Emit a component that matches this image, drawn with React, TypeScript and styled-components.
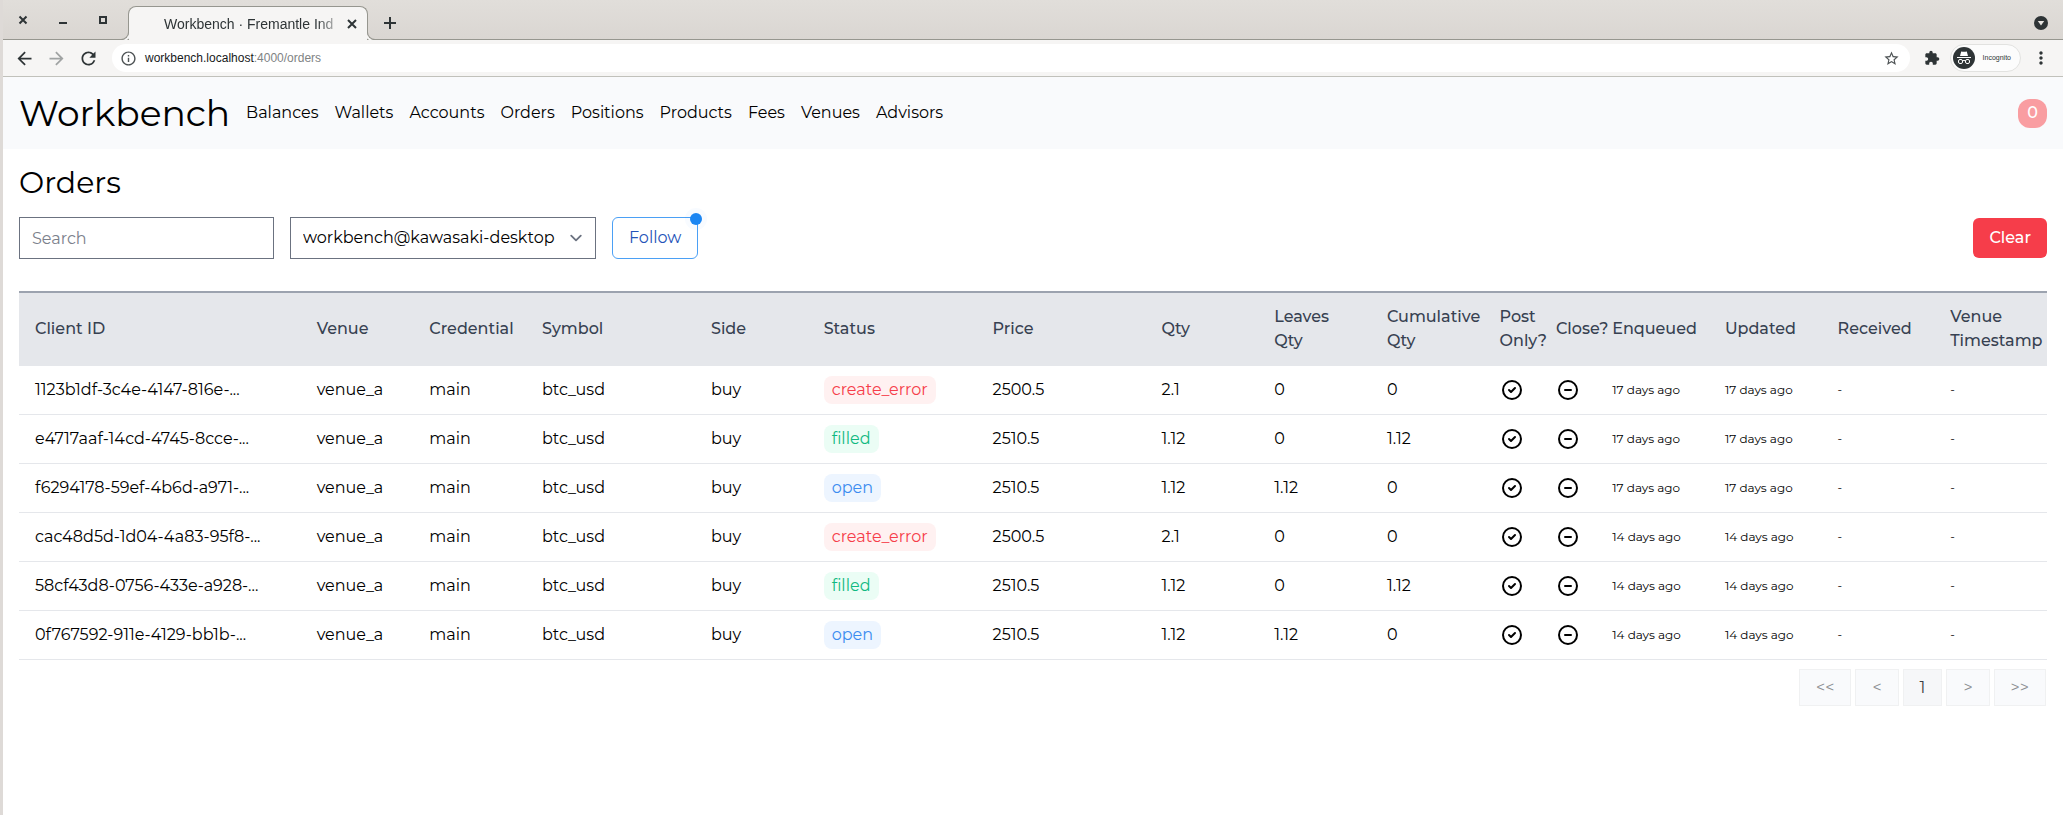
import React from "react";
import styled, { createGlobalStyle, css } from "styled-components";
import {
  MdArrowBack,
  MdArrowForward,
  MdRefresh,
  MdInfoOutline,
  MdStarBorder,
  MdExtension,
  MdMoreVert,
} from "react-icons/md";

const GlobalStyle = createGlobalStyle`
  *, *::before, *::after { box-sizing: border-box; }
  body {
    margin: 0;
    background: #ffffff;
    color: #000000;
    font-family: Montserrat, Inter, "Liberation Sans", sans-serif;
    font-size: 16px;
    line-height: 24px;
  }
  button, input, select { font: inherit; color: inherit; margin: 0; }
  a { color: inherit; text-decoration: none; }
`;

const Window = styled.div`
  display: flex;
  flex-direction: column;
  min-height: 100vh;
  border-left: 3px solid #dedad7;
`;

/* Browser frame */

const TabStrip = styled.div`
  display: flex;
  align-items: flex-end;
  height: 40px;
  padding-right: 14px;
  background: linear-gradient(#e1deda, #dad6d2);
  border-bottom: 1px solid #96968f;
  font-family: "Liberation Sans", sans-serif;
  color: #2e3436;
`;

const IconButton = styled.button`
  display: flex;
  flex: none;
  align-items: center;
  justify-content: center;
  width: 16px;
  height: 16px;
  padding: 0;
  border: 0;
  background: none;
  color: inherit;

  svg {
    flex: none;
  }
`;

const WindowButtons = styled.div`
  display: flex;
  align-self: center;
  gap: 24px;
  width: 125px;
  padding-left: 12px;
`;

const Tab = styled.div`
  position: relative;
  display: flex;
  align-items: center;
  width: 240px;
  height: 34px;
  margin-bottom: -1px;
  padding: 0 7px 0 35px;
  background: #f6f5f4;
  border: 1px solid #96968f;
  border-bottom: 0;
  border-radius: 8px 8px 0 0;

  &::before,
  &::after {
    content: "";
    position: absolute;
    bottom: 0;
    width: 8px;
    height: 8px;
    border: 0 solid #96968f;
    border-bottom-width: 1px;
  }
  &::before {
    left: -8px;
    border-right-width: 1px;
    border-bottom-right-radius: 8px;
    box-shadow: 2px 1px 0 0 #f6f5f4;
  }
  &::after {
    right: -8px;
    border-left-width: 1px;
    border-bottom-left-radius: 8px;
    box-shadow: -2px 1px 0 0 #f6f5f4;
  }
`;

const TabTitle = styled.span`
  flex: 1;
  white-space: nowrap;
  font-size: 14px;
  mask-image: linear-gradient(to right, #000 85%, transparent);
`;

const NewTab = styled(IconButton)`
  align-self: center;
  margin: 6px auto 0 14px;
`;

const TabSearch = styled(IconButton)`
  align-self: center;
  margin-top: 6px;
`;

const AddressBar = styled.div`
  display: flex;
  align-items: center;
  gap: 16px;
  height: 37px;
  padding: 0 14px 0 13px;
  background: #f6f5f4;
  border-bottom: 1px solid #c1c1bb;
  font-family: "Liberation Sans", sans-serif;
  color: #2e3436;
`;

const DimIconButton = styled(IconButton)`
  color: #a0a3a3;
`;

const Omnibox = styled.div`
  display: flex;
  flex: 1;
  align-items: center;
  gap: 8px;
  height: 28px;
  margin-right: -2px;
  padding: 0 10px 0 8px;
  border-radius: 14px;
  background: #ffffff;
  color: #4d5254;
`;

const Url = styled.span`
  flex: 1;
  font-size: 12px;
  color: #808384;

  b {
    font-weight: 400;
    color: #16191a;
  }
`;

const Incognito = styled.button`
  display: flex;
  align-items: center;
  gap: 8px;
  height: 28px;
  margin: 0 -4px 0 -6px;
  padding: 0 9px 0 2px;
  border: 1px solid #e2e2e0;
  border-radius: 14px;
  background: #fcfcfc;
  font-size: 7px;
`;

/* Application */

const Header = styled.header`
  display: flex;
  align-items: center;
  gap: 16px;
  height: 72px;
  padding: 0 16px;
  background: #f9fafc;
`;

const Brand = styled.a`
  font-size: 36px;
  line-height: 40px;
`;

const Nav = styled.nav`
  display: flex;
  flex: 1;
  gap: 16px;
`;

const ErrorCount = styled.span`
  display: flex;
  align-items: center;
  justify-content: center;
  width: 29px;
  height: 29px;
  border-radius: 12px;
  background: #f99da1;
  color: #ffffff;
  font-weight: 500;
`;

const Main = styled.main`
  padding: 16px;
`;

const Title = styled.h1`
  margin: 0 0 16px;
  font-size: 30px;
  font-weight: 400;
  line-height: 36px;
`;

const Toolbar = styled.form`
  display: flex;
  align-items: center;
  gap: 16px;
  margin-bottom: 32px;
`;

const field = css`
  height: 42px;
  padding: 0 12px;
  border: 1px solid #6b7280;
  border-radius: 0;
  background: #ffffff;
`;

const SearchInput = styled.input`
  ${field}
  width: 255px;

  &::placeholder {
    color: #7b808b;
    opacity: 1;
  }
`;

const SelectBox = styled.div`
  position: relative;
  width: 306px;

  svg {
    position: absolute;
    top: 9px;
    right: 8px;
    pointer-events: none;
  }
`;

const NodeSelect = styled.select`
  ${field}
  width: 100%;
  appearance: none;
`;

const FollowButton = styled.button`
  position: relative;
  height: 42px;
  padding: 0 16px;
  border: 1px solid #4ba0f5;
  border-radius: 6px;
  background: #ffffff;
  color: #2453b8;

  &::after {
    content: "";
    position: absolute;
    top: -5px;
    right: -5px;
    width: 12px;
    height: 12px;
    border-radius: 50%;
    background: #1c86f2;
    box-shadow: 0 0 0 5px rgba(28, 134, 242, 0.03);
  }
`;

const ClearButton = styled.button`
  height: 40px;
  margin-left: auto;
  padding: 0 16px;
  border: 0;
  border-radius: 6px;
  background: #f63d4a;
  color: #ffffff;
  font-weight: 500;
`;

const Table = styled.table`
  width: 100%;
  table-layout: fixed;
  border-collapse: separate;
  border-spacing: 0;
`;

const Col = styled.col<{ $span: number }>`
  width: ${(p) => (p.$span / 36) * 100}%;
`;

const HeadCell = styled.th`
  padding: 12px 16px;
  border-top: 2px solid #9ca3af;
  border-bottom: 1px solid #e5e7eb;
  background: #e5e7eb;
  color: #374151;
  font-weight: 500;
  text-align: left;
`;

const Cell = styled.td<{ $small?: boolean }>`
  height: 49px;
  padding: 0 0 0 16px;
  border-bottom: 1px solid #e5e7eb;
  font-size: ${(p) => (p.$small ? 12 : 16)}px;
  white-space: nowrap;

  svg {
    display: block;
  }
`;

type StatusName = "create_error" | "filled" | "open";

const statusColors: Record<StatusName, [string, string]> = {
  create_error: ["#f63d4a", "#fff1f1"],
  filled: ["#10b981", "#ebfdf5"],
  open: ["#3b8cf0", "#edf5ff"],
};

const Status = styled.span<{ $status: StatusName }>`
  display: inline-block;
  padding: 2px 8px;
  border-radius: 8px;
  color: ${(p) => statusColors[p.$status][0]};
  background: ${(p) => statusColors[p.$status][1]};
`;

const Pagination = styled.nav`
  display: flex;
  justify-content: flex-end;
  gap: 4px;
  margin-top: 8px;
  padding: 1px;
`;

const PageButton = styled.button<{ $current?: boolean }>`
  height: 37px;
  padding: 0 16px;
  border: 1px solid #f0f1f2;
  background: ${(p) => (p.$current ? "#f6f7f9" : "#f9fafc")};
  color: ${(p) => (p.$current ? "#3c3f44" : "#8b8d91")};
`;

const OutlineIcon = ({ d, label }: { d: string; label: string }) => (
  <svg width="24" height="24" viewBox="0 0 24 24" fill="none" stroke="#000" strokeWidth="2" strokeLinecap="round" strokeLinejoin="round" role="img" aria-label={label}>
    <circle cx="12" cy="12" r="9" />
    <path d={d} />
  </svg>
);

const navItems = ["Balances", "Wallets", "Accounts", "Orders", "Positions", "Products", "Fees", "Venues", "Advisors"];

const columns: [string, number][] = [
  ["Client ID", 5],
  ["Venue", 2],
  ["Credential", 2],
  ["Symbol", 3],
  ["Side", 2],
  ["Status", 3],
  ["Price", 3],
  ["Qty", 2],
  ["Leaves Qty", 2],
  ["Cumulative Qty", 2],
  ["Post Only?", 1],
  ["Close?", 1],
  ["Enqueued", 2],
  ["Updated", 2],
  ["Received", 2],
  ["Venue Timestamp", 2],
];

interface Order {
  id: string;
  status: StatusName;
  price: string;
  qty: string;
  leaves: string;
  cumulative: string;
  age: string;
}

const orders: Order[] = [
  { id: "1123b1df-3c4e-4147-816e-...", status: "create_error", price: "2500.5", qty: "2.1", leaves: "0", cumulative: "0", age: "17 days ago" },
  { id: "e4717aaf-14cd-4745-8cce-...", status: "filled", price: "2510.5", qty: "1.12", leaves: "0", cumulative: "1.12", age: "17 days ago" },
  { id: "f6294178-59ef-4b6d-a971-...", status: "open", price: "2510.5", qty: "1.12", leaves: "1.12", cumulative: "0", age: "17 days ago" },
  { id: "cac48d5d-1d04-4a83-95f8-...", status: "create_error", price: "2500.5", qty: "2.1", leaves: "0", cumulative: "0", age: "14 days ago" },
  { id: "58cf43d8-0756-433e-a928-...", status: "filled", price: "2510.5", qty: "1.12", leaves: "0", cumulative: "1.12", age: "14 days ago" },
  { id: "0f767592-911e-4129-bb1b-...", status: "open", price: "2510.5", qty: "1.12", leaves: "1.12", cumulative: "0", age: "14 days ago" },
];

const BrowserFrame = () => (
  <>
    <TabStrip>
      <WindowButtons>
        <IconButton aria-label="Close window">
          <svg width="16" height="16" fill="none" stroke="currentColor" strokeWidth="2">
            <path d="M4.5 4.5l7 7M11.5 4.5l-7 7" />
          </svg>
        </IconButton>
        <IconButton aria-label="Minimize window">
          <svg width="16" height="16" fill="none" stroke="currentColor" strokeWidth="2">
            <path d="M4 11h8" />
          </svg>
        </IconButton>
        <IconButton aria-label="Maximize window">
          <svg width="16" height="16" fill="none" stroke="currentColor" strokeWidth="2">
            <path d="M5 5h6v6H5z" />
          </svg>
        </IconButton>
      </WindowButtons>
      <Tab>
        <TabTitle>Workbench · Fremantle Ind</TabTitle>
        <IconButton aria-label="Close tab">
          <svg width="16" height="16" fill="none" stroke="currentColor" strokeWidth="2">
            <path d="M4 4l8 8M12 4l-8 8" />
          </svg>
        </IconButton>
      </Tab>
      <NewTab aria-label="New tab">
        <svg width="16" height="16" fill="none" stroke="currentColor" strokeWidth="2">
          <path d="M8 2v12M2 8h12" />
        </svg>
      </NewTab>
      <TabSearch aria-label="Search tabs">
        <svg width="16" height="16" viewBox="0 0 16 16">
          <circle cx="8" cy="8" r="7" fill="#2e3436" />
          <path d="M4.8 6h6.4L8 10.4z" fill="#e8e5e2" />
        </svg>
      </TabSearch>
    </TabStrip>
    <AddressBar>
      <IconButton aria-label="Back">
        <MdArrowBack size={21} />
      </IconButton>
      <DimIconButton aria-label="Forward">
        <MdArrowForward size={21} />
      </DimIconButton>
      <IconButton aria-label="Reload">
        <MdRefresh size={21} />
      </IconButton>
      <Omnibox>
        <MdInfoOutline size={17} />
        <Url>
          <b>workbench.localhost</b>:4000/orders
        </Url>
        <MdStarBorder size={17} />
      </Omnibox>
      <IconButton aria-label="Extensions">
        <MdExtension size={16} />
      </IconButton>
      <Incognito>
        <svg width="22" height="22" viewBox="0 0 22 22" fill="none" stroke="#fff">
          <circle cx="11" cy="11" r="11" fill="#2e3436" stroke="none" />
          <path d="M7 9l1.2-4.6 1.6.4h2.4l1.6-.4L15 9z" fill="#fff" stroke="none" />
          <path d="M4 10.5h14" />
          <rect x="5.5" y="12.5" width="4" height="4" rx="1.5" />
          <rect x="12.5" y="12.5" width="4" height="4" rx="1.5" />
          <path d="M9.5 13.6h3" />
        </svg>
        Incognito
      </Incognito>
      <IconButton aria-label="Menu">
        <MdMoreVert size={20} />
      </IconButton>
    </AddressBar>
  </>
);

export default function App() {
  return (
    <>
      <GlobalStyle />
      <Window>
        <BrowserFrame />
        <Header>
          <Brand href="#">Workbench</Brand>
          <Nav>
            {navItems.map((item) => (
              <a key={item} href={`#${item.toLowerCase()}`}>{item}</a>
            ))}
          </Nav>
          <ErrorCount>0</ErrorCount>
        </Header>
        <Main>
          <Title>Orders</Title>
          <Toolbar onSubmit={(e) => e.preventDefault()}>
            <SearchInput type="text" placeholder="Search" aria-label="Search" />
            <SelectBox>
              <NodeSelect aria-label="Node">
                <option>workbench@kawasaki-desktop</option>
              </NodeSelect>
              <svg width="24" height="24" viewBox="0 0 20 20" fill="none" stroke="#6b7280" strokeWidth="1.5" strokeLinecap="round" strokeLinejoin="round">
                <path d="M6 8l4 4 4-4" />
              </svg>
            </SelectBox>
            <FollowButton type="button">Follow</FollowButton>
            <ClearButton type="button">Clear</ClearButton>
          </Toolbar>
          <Table>
            <colgroup>
              {columns.map(([name, span]) => (
                <Col key={name} $span={span} />
              ))}
            </colgroup>
            <thead>
              <tr>
                {columns.map(([name]) => (
                  <HeadCell key={name} scope="col">{name}</HeadCell>
                ))}
              </tr>
            </thead>
            <tbody>
              {orders.map((o) => (
                <tr key={o.id}>
                  <Cell>{o.id}</Cell>
                  <Cell>venue_a</Cell>
                  <Cell>main</Cell>
                  <Cell>btc_usd</Cell>
                  <Cell>buy</Cell>
                  <Cell><Status $status={o.status}>{o.status}</Status></Cell>
                  <Cell>{o.price}</Cell>
                  <Cell>{o.qty}</Cell>
                  <Cell>{o.leaves}</Cell>
                  <Cell>{o.cumulative}</Cell>
                  <Cell><OutlineIcon label="Yes" d="M9 12l2 2 4-4" /></Cell>
                  <Cell><OutlineIcon label="No" d="M15 12H9" /></Cell>
                  <Cell $small>{o.age}</Cell>
                  <Cell $small>{o.age}</Cell>
                  <Cell $small>-</Cell>
                  <Cell $small>-</Cell>
                </tr>
              ))}
            </tbody>
          </Table>
          <Pagination aria-label="Pages">
            <PageButton>&lt;&lt;</PageButton>
            <PageButton>&lt;</PageButton>
            <PageButton $current>1</PageButton>
            <PageButton>&gt;</PageButton>
            <PageButton>&gt;&gt;</PageButton>
          </Pagination>
        </Main>
      </Window>
    </>
  );
}
